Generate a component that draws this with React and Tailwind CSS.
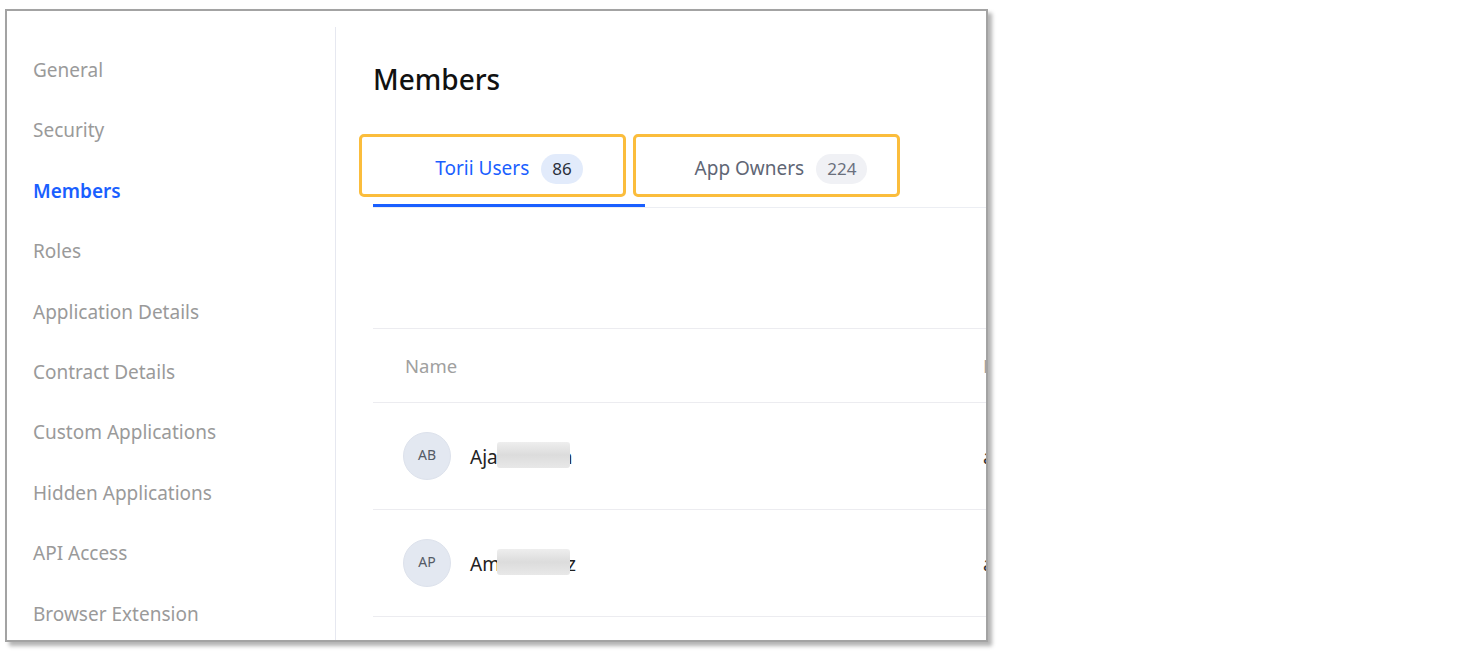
const navItems = [
  'General',
  'Security',
  'Members',
  'Roles',
  'Application Details',
  'Contract Details',
  'Custom Applications',
  'Hidden Applications',
  'API Access',
  'Browser Extension',
]

const members = [
  { initials: 'AB', start: 'Aja', end: 'n', gap: 'w-[63px]', email: 'ajay@torii.com' },
  { initials: 'AP', start: 'Am', end: 'z', gap: 'w-[67px]', email: 'amit@torii.com' },
]

function Sidebar() {
  return (
    <div className="w-[329px] shrink-0 pt-4">
      <div className="h-full border-r border-[#e6e8f0] pl-[26px] pt-[31px]">
        {navItems.map((item) => (
          <div
            key={item}
            className={`h-[60.4px] text-[19px] leading-[24px] ${
              item === 'Members' ? 'text-[#1a5fff] font-semibold' : 'text-[#9a9a9a]'
            }`}
          >
            {item}
          </div>
        ))}
      </div>
    </div>
  )
}

function Tab({ label, count, active }) {
  return (
    <div className="relative w-[272px] h-[75px] flex items-center justify-center gap-3 pb-[2px]">
      <span className={`text-[19px] ${active ? 'text-[#1a5fff]' : 'text-[#5f6675]'}`}>{label}</span>
      <span
        className={`h-[30px] px-[11px] rounded-full flex items-center text-[17px] ${
          active ? 'bg-[#e2ebfb] text-[#2a2f3a]' : 'bg-[#f0f1f5] text-[#6a707d]'
        }`}
      >
        {count}
      </span>
      {active && <div className="absolute left-0 right-0 bottom-0 h-[3px] bg-[#1a5fff]" />}
    </div>
  )
}

function MemberRow({ member }) {
  return (
    <div className="h-[107px] border-b border-[#ececf0] flex items-center">
      <div className="w-[610px] shrink-0 flex items-center pl-[30px]">
        <div className="w-12 h-12 rounded-full bg-[#e3e8f1] border border-[#dde2ec] flex items-center justify-center text-[14px] text-[#555b66] pb-[3px]">
          {member.initials}
        </div>
        <div className="ml-[19px] mt-[3px] relative text-[19px] text-[#222] flex items-center">
          <span>{member.start}</span>
          <span className={`inline-block ${member.gap}`} />
          <span>{member.end}</span>
          <div className="absolute left-[27px] -top-[1px] w-[73px] h-[26px] rounded-[3px] bg-gradient-to-b from-[#eeeeee] via-[#dcdcdc] to-[#e8e8e8]" />
        </div>
      </div>
      <div className="mt-[3px] text-[19px] text-[#333] whitespace-nowrap">{member.email}</div>
    </div>
  )
}

export default function App() {
  return (
    <div className="w-[1474px] h-[652px] bg-white" style={{ fontFamily: '"Noto Sans", sans-serif' }}>
      <div className="absolute left-[5px] top-[9px] w-[983px] h-[633px] border-2 border-[#a3a3a3] bg-white shadow-[4px_4px_4px_rgba(0,0,0,0.3)] overflow-hidden flex">
        <Sidebar />
        <div className="flex-1 pl-[37px] pt-[48px] min-w-0">
          <div className="w-[800px]">
            <h1 className="text-[28px] leading-[40px] text-[#111] font-medium">Members</h1>
            <div className="mt-[33px] flex border-b border-[#eceef3]">
              <Tab label="Torii Users" count="86" active />
              <Tab label="App Owners" count="224" />
            </div>
            <div className="h-[120px]" />
            <div className="border-t border-[#ececf0]">
              <div className="h-[74px] border-b border-[#ececf0] flex items-center text-[18.5px] text-[#a0a0a0]">
                <div className="w-[610px] shrink-0 pl-[32px]">Name</div>
                <div>Email</div>
              </div>
              {members.map((m) => (
                <MemberRow key={m.initials} member={m} />
              ))}
            </div>
          </div>
        </div>
        <div className="absolute left-[352px] top-[123px] w-[267px] h-[63px] border-[3px] border-[#fbbd3c] rounded-[5px]" />
        <div className="absolute left-[626px] top-[123px] w-[267px] h-[63px] border-[3px] border-[#fbbd3c] rounded-[5px]" />
      </div>
    </div>
  )
}
